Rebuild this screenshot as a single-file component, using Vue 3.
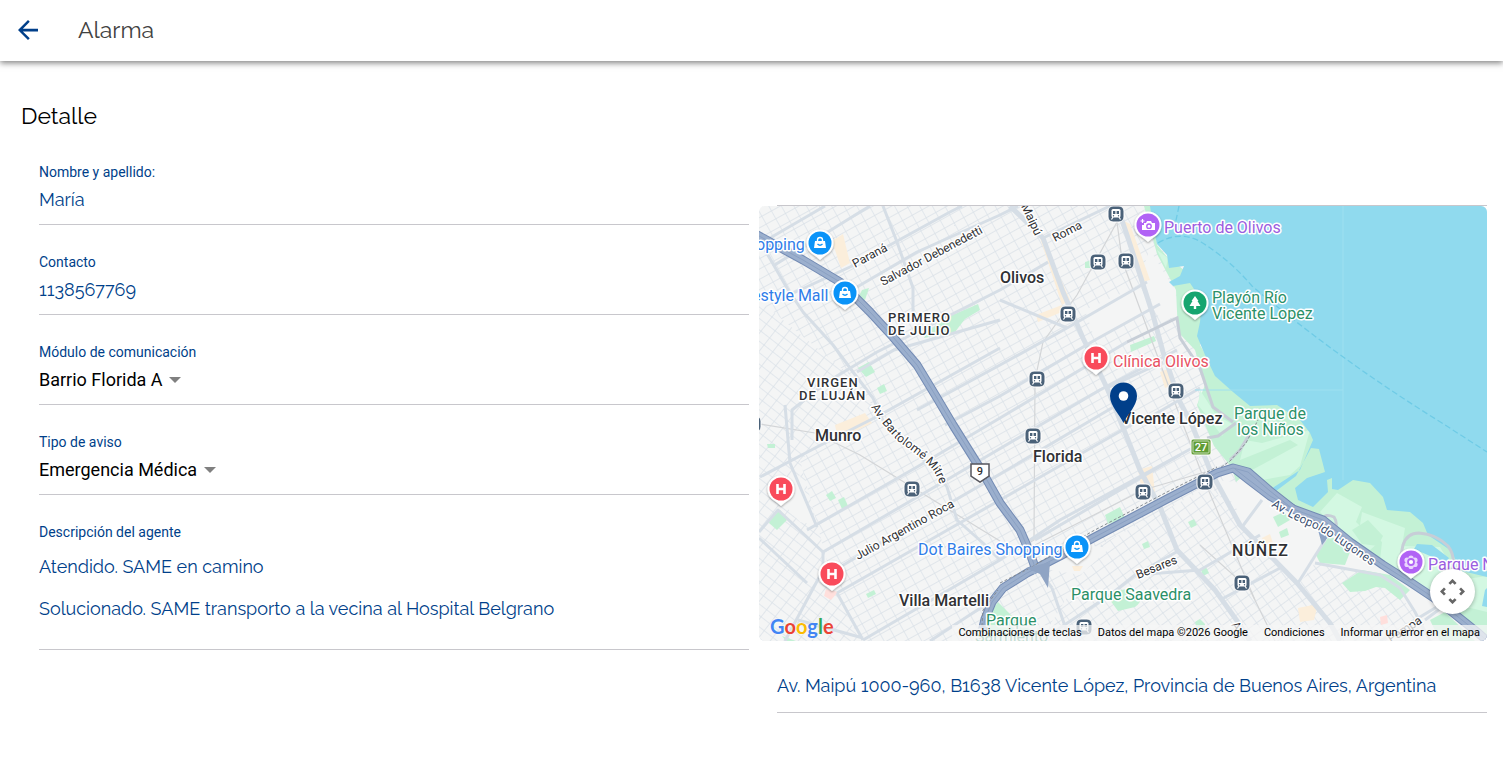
<template>
  <div class="page">
    <header class="toolbar">
      <button class="back-btn" type="button" aria-label="Volver">
        <svg viewBox="0 0 24 24">
          <path d="M20 10.900H7.900l5.500-5.500L12 4l-8 8 8 8 1.400-1.400L7.900 13.100H20z" />
        </svg>
      </button>
      <h1>Alarma</h1>
    </header>

    <main class="content">
      <h2>Detalle</h2>

      <div class="columns">
        <section class="fields">
          <div v-for="field in textFields" :key="field.id" class="item">
            <label :for="field.id">{{ field.label }}</label>
            <input :id="field.id" class="value" type="text" :value="field.value" readonly />
          </div>

          <div v-for="field in selectFields" :key="field.id" class="item">
            <label :for="field.id">{{ field.label }}</label>
            <div class="select-wrap">
              <select :id="field.id" v-model="field.value">
                <option :value="field.value">{{ field.value }}</option>
              </select>
              <span class="caret"></span>
            </div>
          </div>

          <div class="item notes">
            <h3>Descripción del agente</h3>
            <p v-for="note in notes" :key="note">{{ note }}</p>
          </div>
        </section>

        <section class="location">
          <div class="spacer"></div>

          <div class="map">
            <svg class="map-canvas" viewBox="759 206 728 435" preserveAspectRatio="xMidYMid slice">
              <defs>
                <pattern id="grid-north" width="11" height="9" patternUnits="userSpaceOnUse" patternTransform="rotate(-29)">
                  <path d="M0 0H11M0 0V9" class="grid-line" />
                </pattern>
                <pattern id="grid-west" width="9" height="11" patternUnits="userSpaceOnUse" patternTransform="rotate(-52)">
                  <path d="M0 0H9M0 0V11" class="grid-line" />
                </pattern>
                <pattern id="grid-south" width="10" height="9" patternUnits="userSpaceOnUse" patternTransform="rotate(-36)">
                  <path d="M0 0H10M0 0V9" class="grid-line" />
                </pattern>
                <path id="mitre-path" d="M871 407Q882 425 898 441Q924 459 933 470Q939 479 943 495" />
                <path id="lugones-path" d="M1271 506Q1292 520 1318 530Q1346 547 1390 579" />
                <filter id="pin-shadow" x="-30%" y="-30%" width="160%" height="160%">
                  <feDropShadow dx="0" dy="1" stdDeviation="1" flood-opacity="0.4" />
                </filter>
                <g id="icon-bag">
                  <path d="M-5 -2H5L6 5H-6Z" fill="#fff" />
                  <path d="M-2.500 -1V-3A2.500 2.500 0 0 1 2.500 -3V-1" fill="none" stroke="#fff" stroke-width="1.4" />
                  <path d="M-2.5 1Q0 3.5 2.5 1" fill="none" stroke="#0a93f8" stroke-width="1.3" />
                </g>
                <path id="icon-hospital" d="M-3.5 -5V5M3.5 -5V5M-3.5 0H3.5" fill="none" stroke="#fff" stroke-width="2.6" />
                <g id="icon-camera">
                  <path d="M-4 -2H-2L-1 -4H3L4 -2H7V5H-6V0H-4Z" fill="#fff" />
                  <circle cx="1" cy="1.2" r="2.2" fill="#fff" stroke="#b163f5" stroke-width="1.4" />
                  <path d="M-5.500 -6V-2M-7.500 -4H-3.500" stroke="#fff" stroke-width="1.2" />
                </g>
                <path id="icon-tree" d="M0 -7L3.500 -2H2.500L5.500 3H1.200V6H-1.200V3H-5.500L-2.500 -2H-3.500Z" fill="#fff" />
                <g id="icon-flower">
                  <g fill="#e9d6fd">
                    <circle cx="0" cy="-4" r="2.600" />
                    <circle cx="4" cy="-2" r="2.600" />
                    <circle cx="4" cy="2.500" r="2.600" />
                    <circle cx="0" cy="4.500" r="2.600" />
                    <circle cx="-4" cy="2.500" r="2.600" />
                    <circle cx="-4" cy="-2" r="2.600" />
                  </g>
                  <circle cx="0" cy="0" r="3" fill="#fff" stroke="#b163f5" stroke-width="1.800" />
                </g>
                <g id="station">
                  <rect x="-8" y="-8" width="16" height="16" rx="5" fill="#4a6178" stroke="#fff" stroke-width="1" />
                  <rect x="-4.500" y="-5" width="9" height="8.500" rx="1.500" fill="#fff" />
                  <path d="M-3 -3H-.6V0H-3ZM.6 -3H3V0H.6Z" fill="#4a6178" />
                  <path d="M-3 3L-4.500 5.500M3 3L4.500 5.500" stroke="#fff" stroke-width="1.200" />
                  <circle cx="-2.500" cy="1.800" r=".7" fill="#4a6178" />
                  <circle cx="2.500" cy="1.800" r=".7" fill="#4a6178" />
                </g>
              </defs>

              <!-- terrain and street grids -->
              <rect x="759" y="206" width="728" height="435" fill="#f4f5f5" />
              <rect x="759" y="206" width="480" height="435" fill="url(#grid-north)" />
              <path d="M759 300L795 330L850 375L872 405L800 460L820 535L835 590L860 641H759Z" fill="#f4f5f5" />
              <path d="M759 300L795 330L850 375L872 405L800 460L820 535L835 590L860 641H759Z" fill="url(#grid-west)" />
              <path d="M1100 545L1210 486L1300 583L1345 610L1440 600L1487 641H1040Z" fill="#f4f5f5" />
              <path d="M1100 545L1210 486L1260 545L1300 583L1315 563L1380 575L1440 641H1040Z" fill="url(#grid-south)" />
              <path v-for="d in blank" :key="d" :d="d" fill="#f4f5f5" />
              <path v-for="d in commercial" :key="d" :d="d" fill="#fbeedb" />
              <path d="M826 589L838 592L831 600L824 596ZM1380 617L1387 615L1388 623L1381 625Z" fill="#ffdfdc" />
              <path v-for="d in parks" :key="d" :d="d" fill="#c3f1d5" />

              <!-- railways and avenues -->
              <path v-for="d in railways" :key="d" :d="d" fill="none" stroke="#d3d5d7" stroke-width="1.200" />
              <path v-for="d in roads" :key="d" :d="d" class="road" />
              <path v-for="d in avenues" :key="d" :d="d" class="road avenue" />

              <!-- coast -->
              <path d="M1144 206H1154L1157 245L1168 258L1184 270L1194 286L1203 320L1200 345L1220 380L1251 405L1277 400L1302 418L1328 445L1340 476L1372 478L1395 500L1425 512L1445 540L1470 572L1487 576V636L1440 605L1380 565L1326 520L1293 509L1250 470L1236 482L1232 468L1214 446L1197 405L1205 385L1195 350L1178 332L1176 290L1157 254Z" fill="#c3f1d5" />
              <path d="M1200 390L1216 415L1232 424L1222 436L1210 420L1198 405ZM1245 440L1262 443L1310 430L1300 466L1290 475L1262 480L1252 470L1298 445L1290 440L1240 460ZM1157 250L1168 258L1166 268ZM1337 493L1362 507L1356 522L1378 543L1370 550L1340 532L1320 512ZM1362 512L1405 528L1402 546L1440 547L1460 580L1487 576V612L1438 600L1380 560L1382 542L1360 525Z" fill="#d3f8e2" />
              <path d="M1352 530L1368 520L1383 536L1378 546L1362 544Z" fill="#c3f1d5" />
              <path class="water" d="M1150 206L1153 226L1157 244L1167 255L1169 268L1184 266L1180 276L1169 282L1173 286L1190 283L1202 301L1200 322L1197 336L1205 355L1215 376L1233 392L1250 406L1277 405L1300 420L1310 433L1313 440L1300 470L1271 489L1276 491L1296 476L1311 448L1319 449L1325 472L1307 478L1295 488L1298 500L1313 507L1328 492L1327 480L1332 478V489L1338 490L1353 480L1370 483L1383 497L1387 510L1410 512L1423 523L1428 535L1450 550L1462 571L1487 577V206Z" />
              <path class="water" d="M1417 544L1432 545L1449 558L1446 563L1414 549ZM1485 590L1487 588V607L1482 606Z" />
              <path d="M1343 206V480M1195 390H1343" stroke="#9ee0f0" stroke-width="1" fill="none" />
              <path d="M1158 243Q1180 230 1201 242Q1230 260 1252 286Q1340 360 1442 423L1487 452M1179 206L1175 225" fill="none" stroke="#6fcbe6" stroke-width="1.300" stroke-dasharray="6 3" />
              <path d="M1127 342L1177 318L1180 338L1200 368L1213 407L1233 422M1236 423L1218 436L1207 438M1249 435L1240 450L1230 460M1400 560L1403 545Q1407 533 1419 533Q1436 534 1448 546Q1457 558 1451 575M1323 519Q1325 513 1334 517Q1338 523 1335 530" fill="none" stroke="#c7ced7" stroke-width="3" />
              <path d="M1217 470L1230 461L1246 443L1258 420" class="dashed" />

              <!-- highways -->
              <path v-for="d in highways" :key="d" :d="d" class="highway-edge" />
              <path v-for="d in highways" :key="'in' + d" :d="d" class="highway" />
              <path v-for="d in highways" :key="'mid' + d" :d="d" class="highway-middle" />
              <path d="M1000 583L1030 568L1060 550L1093 531L1167 492L1217 467M981 641L983 610L998 590" class="dashed" />
              <path d="M1026 568L1050 562L1048 588L1040 574ZM1318 530L1332 532L1322 545Z" fill="#8fa4c4" />

              <!-- road shields -->
              <path d="M971 464H989V476L980 482L971 476Z" fill="#fff" stroke="#56565d" stroke-width="1.500" />
              <text x="980" y="475" class="shield">9</text>
              <rect x="1191" y="439" width="20" height="16" rx="2" fill="#619d35" stroke="#fff" stroke-width="1" />
              <rect x="1193" y="441" width="16" height="12" rx="1" fill="none" stroke="#c5dcb4" stroke-width="1" />
              <text x="1201" y="451" class="shield light">27</text>

              <use v-for="(s, i) in stations" :key="i" href="#station" :x="s[0]" :y="s[1]" />

              <!-- names -->
              <text
                v-for="label in labels"
                :key="label.text"
                class="map-label"
                :class="label.kind"
                :x="label.x"
                :y="label.y"
                :transform="label.angle ? `rotate(${label.angle} ${label.x} ${label.y})` : null"
              >{{ label.text }}</text>
              <text class="map-label street"><textPath href="#mitre-path">Av. Bartolomé Mitre</textPath></text>
              <text class="map-label street highway-name"><textPath href="#lugones-path">Av. Leopoldo Lugones</textPath></text>

              <g v-for="(pin, i) in pins" :key="'pin' + i" :transform="`translate(${pin.x} ${pin.y})`">
                <path d="M0 17Q-3 14 -9 10A13.500 13.500 0 1 1 9 10Q3 14 0 17Z" fill="#fff" filter="url(#pin-shadow)" />
                <circle r="11.500" :fill="pin.color" />
                <use :href="'#icon-' + pin.icon" />
              </g>

              <path d="M1123.500 423C1120 415 1110 406 1110 396A13.500 13.500 0 0 1 1137 396C1137 406 1127 415 1123.500 423Z" fill="#003f8a" />
              <circle cx="1123.500" cy="396" r="4.800" fill="#fff" />
            </svg>

            <a class="google" href="#" aria-label="Google">
              <span class="blue">G</span><span class="red">o</span><span class="yellow">o</span><span class="blue">g</span><span class="green">l</span><span class="red">e</span>
            </a>

            <button class="move-btn" type="button" aria-label="Controles de la cámara del mapa">
              <svg viewBox="0 0 28 28">
                <path d="M10.500 5.500l3.500-3.500 3.500 3.500M10.500 22.500l3.500 3.500 3.500-3.500M5.500 10.500l-3.500 3.500 3.500 3.500M22.500 10.500l3.500 3.500-3.500 3.500" />
              </svg>
            </button>

            <div class="attribution">
              <button type="button">Combinaciones de teclas</button>
              <span>Datos del mapa ©2026 Google</span>
              <a href="#">Condiciones</a>
              <a href="#">Informar un error en el mapa</a>
            </div>
          </div>

          <p class="address">Av. Maipú 1000-960, B1638 Vicente López, Provincia de Buenos Aires, Argentina</p>
        </section>
      </div>
    </main>
  </div>
</template>

<script setup>
import { ref } from 'vue'

const textFields = [
  { id: 'nombre', label: 'Nombre y apellido:', value: 'María' },
  { id: 'contacto', label: 'Contacto', value: '1138567769' }
]

const selectFields = ref([
  { id: 'modulo', label: 'Módulo de comunicación', value: 'Barrio Florida A' },
  { id: 'tipo', label: 'Tipo de aviso', value: 'Emergencia Médica' }
])

const notes = [
  'Atendido. SAME en camino',
  'Solucionado. SAME transporto a la vecina al Hospital Belgrano'
]

const pins = [
  { x: 820, y: 243, icon: 'bag', color: '#0a93f8' },
  { x: 845, y: 293, icon: 'bag', color: '#0a93f8' },
  { x: 1077, y: 547, icon: 'bag', color: '#0a93f8' },
  { x: 1096, y: 358, icon: 'hospital', color: '#f94b5b' },
  { x: 781, y: 489, icon: 'hospital', color: '#f94b5b' },
  { x: 832, y: 574, icon: 'hospital', color: '#f94b5b' },
  { x: 1148, y: 225, icon: 'camera', color: '#b163f5' },
  { x: 1411, y: 562, icon: 'flower', color: '#b163f5' },
  { x: 1195, y: 303, icon: 'tree', color: '#16a56f' }
]

const stations = [
  [1116, 214], [1098, 262], [1126, 261], [1068, 314], [1037, 379], [1176, 391],
  [1033, 436], [1143, 492], [1205, 482], [912, 489], [1242, 583], [1084, 627], [753, 424]
]

const labels = [
  { text: 'opping', x: 756, y: 250, kind: 'shop' },
  { text: 'estyle Mall', x: 752, y: 301, kind: 'shop' },
  { text: 'Dot Baires Shopping', x: 918, y: 555, kind: 'shop' },
  { text: 'Puerto de Olivos', x: 1164, y: 233, kind: 'sight' },
  { text: 'Parque N', x: 1428, y: 570, kind: 'sight' },
  { text: 'Clínica Olivos', x: 1113, y: 367, kind: 'health' },
  { text: 'Playón Río', x: 1212, y: 303, kind: 'park' },
  { text: 'Vicente Lopez', x: 1212, y: 319, kind: 'park' },
  { text: 'Parque de', x: 1234, y: 419, kind: 'park' },
  { text: 'los Niños', x: 1237, y: 435, kind: 'park' },
  { text: 'Parque Saavedra', x: 1071, y: 600, kind: 'park' },
  { text: 'Parque', x: 986, y: 626, kind: 'park' },
  { text: 'Sarmiento', x: 975, y: 642, kind: 'park' },
  { text: 'Olivos', x: 1000, y: 283, kind: 'town' },
  { text: 'Vicente López', x: 1121, y: 424, kind: 'town' },
  { text: 'Munro', x: 815, y: 441, kind: 'town' },
  { text: 'Florida', x: 1033, y: 462, kind: 'town' },
  { text: 'Villa Martelli', x: 899, y: 606, kind: 'town' },
  { text: 'PRIMERO', x: 888, y: 322, kind: 'district' },
  { text: 'DE JULIO', x: 888, y: 335, kind: 'district' },
  { text: 'VIRGEN', x: 807, y: 387, kind: 'district' },
  { text: 'DE LUJÁN', x: 799, y: 400, kind: 'district' },
  { text: 'NÚÑEZ', x: 1232, y: 556, kind: 'district large' },
  { text: 'Paraná', x: 855, y: 268, kind: 'street', angle: -28 },
  { text: 'Salvador Debenedetti', x: 883, y: 286, kind: 'street', angle: -28 },
  { text: 'Roma', x: 1055, y: 242, kind: 'street', angle: -27 },
  { text: 'Maipú', x: 1021, y: 206, kind: 'street', angle: 65 },
  { text: 'Julio Argentino Roca', x: 858, y: 560, kind: 'street', angle: -29 },
  { text: 'Besares', x: 1138, y: 579, kind: 'street', angle: -22 },
  { text: 'Pampa', x: 1391, y: 643, kind: 'street', angle: -33 },
  { text: 'Av.', x: 1231, y: 625, kind: 'street', angle: 55 }
]

const highways = [
  'M750 231L803 260L840 282L870 312L893 337L917 365L937 398L953 425L983 473L1000 503L1020 530L1030 553L1037 573',
  'M979 645L985 619L992 602L1003 588L1027 573L1060 556L1093 538L1133 517L1167 499L1200 482L1217 473L1233 468L1248 472L1270 491L1293 509L1323 520L1350 542L1383 565L1410 582L1437 600L1477 632L1492 645',
  'M1235 469L1249 480L1270 496L1293 509'
]

// open lots where the street grid is interrupted
const blank = [
  'M1150 250L1175 290L1180 316L1160 320L1140 275Z',
  'M1085 310L1140 285L1150 310L1095 340Z',
  'M775 495L800 475L815 525L800 522Z',
  'M1215 480L1236 482L1290 525L1260 540Z',
  'M1040 568L1085 545L1110 548L1080 575Z',
  'M1300 540L1330 530L1300 583L1285 570Z'
]

const commercial = [
  'M832 241L843 234L850 263L841 268Z',
  'M1122 220L1130 224L1150 280L1142 282Z',
  'M1040 238L1048 250L1070 300L1062 305Z',
  'M1036 315L1062 305L1064 311L1038 322Z',
  'M835 425L865 413L872 423L838 440Z',
  'M1138 470L1152 466L1155 493L1143 496Z',
  'M1160 372L1170 368L1175 385L1165 388Z',
  'M1298 608L1318 604L1314 620L1300 622Z',
  'M1072 566L1083 566L1080 571L1074 571Z',
  'M1262 538L1270 534L1273 543L1265 546Z'
]

const parks = [
  'M950 316L962 311L978 304L980 310L965 319L955 332L924 338L928 331Z',
  'M858 368L869 362L875 372L866 377Z',
  'M877 388L884 384L887 391L880 394Z',
  'M862 290L869 288L865 300L858 298Z',
  'M1130 345L1154 336L1156 341L1131 352Z',
  'M1085 262L1092 260L1093 268L1085 268Z',
  'M771 517L780 510L787 520L777 530L769 523Z',
  'M826 495L832 491L836 498L830 501Z',
  'M838 500L844 497L848 506L842 509Z',
  'M866 594L874 590L876 594L868 598Z',
  'M1105 515L1120 507L1125 518L1108 524Z',
  'M1142 544L1148 541L1150 547L1144 549Z',
  'M1188 522L1194 519L1197 525L1191 528Z',
  'M1201 570L1206 567L1209 573L1203 576Z',
  'M1110 600Q1120 584 1135 592Q1146 599 1135 607L1118 611Z',
  'M985 619L998 602L1008 612L1018 622L1048 641H983Z',
  'M1195 622L1200 619L1205 624V631L1197 629Z',
  'M1273 517L1284 512L1290 520L1278 527Z',
  'M1279 532L1287 528L1289 535L1281 538Z',
  'M1316 555L1330 535L1350 552L1345 565L1320 563Z',
  'M1342 583L1356 574L1362 570L1390 575L1410 590L1400 600L1385 588L1376 587L1365 591L1350 592Z',
  'M1430 620L1445 612L1475 641H1440Z',
  'M782 636L796 641H786Z',
  'M767 444H775V448H768Z'
]

const railways = [
  'M1117 222L1077 295L1043 342L1035 380L1034 540L1000 560',
  'M1117 222L1122 260L1170 390L1205 482L1255 600',
  'M759 424L815 433L860 455L912 487L1000 541',
  'M1035 545L1143 490L1205 472',
  'M1200 545L1250 590L1275 641'
]

const roads = [
  'M770 238L813 213L825 206',
  'M773 266L860 212L870 206',
  'M778 300L850 267L890 245L950 212L962 206',
  'M857 287L917 252L1000 215L1018 206',
  'M883 206L897 242L913 288L913 312',
  'M765 250L787 288L803 312L833 345L853 372L873 398L885 425L935 470L947 487L957 520L983 543L1000 560',
  'M792 440V410L827 382L877 352L1000 290L1048 262',
  'M857 372L894 350L1000 320',
  'M917 410L1000 365L1067 328L1147 282',
  'M945 425L1000 396L1095 340L1160 304',
  'M760 477L817 447L880 415L1000 348',
  'M790 463L817 527M790 463L785 405',
  'M807 530L917 467L1000 418L1080 370L1127 342',
  'M823 552L950 478L1100 390L1177 350',
  'M827 575L850 561L1000 474L1122 402',
  'M837 593L930 540L1000 500L1140 420',
  'M863 640L1000 560L1060 520L1207 440',
  'M1035 540L1140 478L1180 455',
  'M759 538L807 583M823 552L823 570L785 641',
  'M759 532L778 510L823 552',
  'M837 593L863 640M798 620L863 638',
  'M930 641L985 605M1040 641L1110 595L1135 575L1180 550',
  'M1043 238L1110 206M1107 388L1163 362',
  'M1067 328L1000 300M1145 420L1200 388',
  'M1052 588L1070 641M1040 572L1052 588',
  'M1135 575L1200 570L1260 535',
  'M1220 600L1282 567M1242 527L1262 500',
  'M1298 583L1325 540',
  'M1315 563L1380 575L1400 588L1415 612L1430 641',
  'M1380 641L1440 605M1425 620L1445 605'
]

const avenues = [
  'M1010 206L1043 238L1063 292L1083 338L1107 388L1122 425L1140 470L1160 507L1177 550L1215 590L1240 625L1250 641',
  'M1117 206L1127 235L1140 275L1153 315L1163 352L1180 402L1192 425L1210 470L1240 525L1297 583L1330 623L1340 641'
]
</script>

<style>
body {
  background: #fff;
}
</style>

<style scoped>
.page {
  min-height: 100vh;
  font-family: Roboto, sans-serif;
  color: #000;
}

.toolbar {
  display: flex;
  align-items: center;
  height: 59px;
  padding: 0 13px 2px;
  gap: 35px;
  background: #fff;
  box-shadow: 0 2px 6px rgba(0, 0, 0, 0.5);
}

.back-btn {
  display: flex;
  width: 30px;
  height: 30px;
  padding: 0;
  border: none;
  background: none;
  cursor: pointer;
}

.back-btn svg {
  width: 30px;
  height: 30px;
  fill: #003f8a;
}

h1,
h2 {
  margin: 0;
  font-family: Raleway, Lato, sans-serif;
  font-size: 23px;
  line-height: 28px;
  font-weight: 400;
}

h1 {
  color: #424242;
}

.content {
  padding: 41px 16px 16px 21px;
}

.columns {
  display: grid;
  grid-template-columns: 1fr 1fr;
  gap: 10px;
  padding-top: 5px;
}

.item {
  display: flex;
  flex-direction: column;
  margin-left: 18px;
  padding: 27px 0 10px;
  gap: 4px;
  border-bottom: 1px solid #c8c7cc;
}

.item label,
.item h3 {
  margin: 0;
  color: #003f8a;
  font-size: 14px;
  line-height: 20px;
  font-weight: 400;
}

.value,
.notes p,
.address {
  margin: 0;
  color: #003f8a;
  font-family: Raleway, Lato, sans-serif;
  font-size: 18px;
  line-height: 28px;
}

.value {
  width: 100%;
  height: 28px;
  padding: 0;
  border: none;
  outline: none;
  background: none;
}

.select-wrap {
  display: flex;
  align-items: center;
  gap: 6px;
  height: 28px;
}

.select-wrap select {
  appearance: none;
  padding: 0;
  border: none;
  outline: none;
  background: none;
  color: #000;
  font-family: Roboto, sans-serif;
  font-size: 18px;
  line-height: 28px;
}

.caret {
  border-top: 6px solid #808080;
  border-left: 6px solid transparent;
  border-right: 6px solid transparent;
  pointer-events: none;
}

.notes {
  gap: 14px;
  padding-bottom: 26px;
}

.notes h3 {
  margin-bottom: -3px;
}

.location {
  padding-top: 70px;
}

.spacer {
  margin-left: 18px;
  border-top: 1px solid #c8c7cc;
}

.map {
  position: relative;
  height: 435px;
  overflow: hidden;
  border-radius: 6px;
}

.map-canvas {
  display: block;
  width: 100%;
  height: 100%;
}

.grid-line {
  fill: none;
  stroke: #dae1e8;
  stroke-width: 1.4;
}

.road {
  fill: none;
  stroke: #d6dee6;
  stroke-width: 3;
  stroke-linejoin: round;
}

.avenue {
  stroke-width: 5;
}

.water {
  fill: #90daee;
}

.highway-edge,
.highway,
.highway-middle {
  fill: none;
  stroke: #738bb4;
  stroke-width: 9;
  stroke-linejoin: round;
}

.highway {
  stroke: #9bafcd;
  stroke-width: 7;
}

.highway-middle {
  stroke: #8ba1c3;
  stroke-width: 1;
}

.dashed {
  fill: none;
  stroke: #858b91;
  stroke-width: 1;
  stroke-dasharray: 3 2;
}

.map-label {
  fill: #303134;
  font-size: 16px;
  stroke: #fff;
  stroke-width: 3;
  stroke-linejoin: round;
  paint-order: stroke;
}

.shop {
  fill: #2f7de9;
}

.sight {
  fill: #9b5de0;
}

.health {
  fill: #e85263;
}

.park {
  fill: #2b9068;
}

.town {
  font-weight: 500;
}

.district {
  font-size: 13px;
  font-weight: 500;
  letter-spacing: 1px;
}

.district.large {
  font-size: 16px;
}

.street {
  font-size: 12px;
}

.highway-name {
  fill: #3c4f70;
}

.shield {
  fill: #303134;
  font-size: 11px;
  font-weight: 500;
  text-anchor: middle;
}

.shield.light {
  fill: #fff;
}

.google {
  position: absolute;
  left: 11px;
  bottom: 0;
  font-family: Lato, sans-serif;
  font-size: 20px;
  line-height: 30px;
  font-weight: 700;
  text-decoration: none;
  text-shadow: 0 0 2px #fff;
}

.blue {
  color: #4285f4;
}

.red {
  color: #ea4335;
}

.yellow {
  color: #fbbc04;
}

.green {
  color: #34a853;
}

.move-btn {
  position: absolute;
  right: 12px;
  bottom: 27px;
  display: flex;
  align-items: center;
  justify-content: center;
  width: 45px;
  height: 45px;
  padding: 0;
  border: none;
  border-radius: 50%;
  background: #fff;
  box-shadow: 0 1px 4px rgba(0, 0, 0, 0.3);
  cursor: pointer;
}

.move-btn svg {
  width: 25px;
  height: 25px;
  fill: none;
  stroke: #666;
  stroke-width: 3;
}

.attribution {
  position: absolute;
  right: 0;
  bottom: 0;
  display: flex;
  gap: 16px;
  padding: 0 7px 0 6px;
  background: rgba(245, 245, 245, 0.75);
  font-size: 11px;
  line-height: 16px;
  white-space: nowrap;
}

.attribution button {
  padding: 0;
  border: none;
  background: none;
  color: #000;
  font: inherit;
  cursor: pointer;
}

.attribution a {
  color: #000;
  text-decoration: none;
}

.address {
  margin-left: 18px;
  padding: 31px 0 12px;
  border-bottom: 1px solid #c8c7cc;
}

@media (max-width: 900px) {
  .columns {
    grid-template-columns: 1fr;
  }

  .location {
    padding-top: 24px;
  }
}
</style>
